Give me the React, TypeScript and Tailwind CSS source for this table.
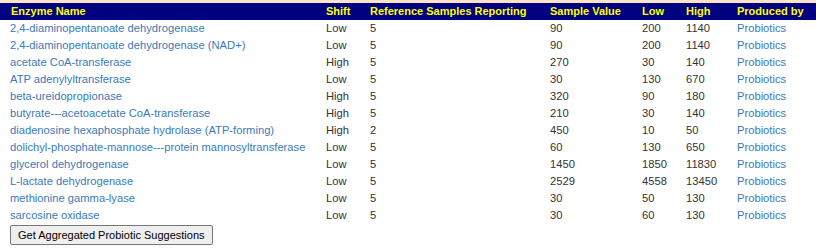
import React from "react";

const rows: [string, string, string, string, string, string][] = [
  ["2,4-diaminopentanoate dehydrogenase", "Low", "5", "90", "200", "1140"],
  ["2,4-diaminopentanoate dehydrogenase (NAD+)", "Low", "5", "90", "200", "1140"],
  ["acetate CoA-transferase", "High", "5", "270", "30", "140"],
  ["ATP adenylyltransferase", "Low", "5", "30", "130", "670"],
  ["beta-ureidopropionase", "High", "5", "320", "90", "180"],
  ["butyrate---acetoacetate CoA-transferase", "High", "5", "210", "30", "140"],
  ["diadenosine hexaphosphate hydrolase (ATP-forming)", "High", "2", "450", "10", "50"],
  ["dolichyl-phosphate-mannose---protein mannosyltransferase", "Low", "5", "60", "130", "650"],
  ["glycerol dehydrogenase", "Low", "5", "1450", "1850", "11830"],
  ["L-lactate dehydrogenase", "Low", "5", "2529", "4558", "13450"],
  ["methionine gamma-lyase", "Low", "5", "30", "50", "130"],
  ["sarcosine oxidase", "Low", "5", "30", "60", "130"],
];

export default function App() {
  return (
    <div className="w-[816px] h-[250px] bg-white text-[11px] text-[#333] overflow-hidden" style={{ fontFamily: '"Liberation Sans", Arial, sans-serif' }}>
      <div className="h-[3px] bg-[#fde4c9]" />
      <table className="w-full table-fixed border-collapse">
        <colgroup>
          <col className="w-[316px]" />
          <col className="w-[44px]" />
          <col className="w-[180px]" />
          <col className="w-[92px]" />
          <col className="w-[44px]" />
          <col className="w-[51px]" />
          <col />
        </colgroup>
        <thead>
          <tr className="bg-[#000080] text-[#ffff00] font-bold h-[17px] text-left">
            <th className="pl-[11px] py-0 leading-[17px]">Enzyme Name</th>
            <th className="pl-[10px] py-0 leading-[17px]">Shift</th>
            <th className="pl-[10px] py-0 leading-[17px] whitespace-nowrap">Reference Samples Reporting</th>
            <th className="pl-[10px] py-0 leading-[17px] whitespace-nowrap">Sample Value</th>
            <th className="pl-[10px] py-0 leading-[17px]">Low</th>
            <th className="pl-[10px] py-0 leading-[17px]">High</th>
            <th className="pl-[10px] py-0 leading-[17px] whitespace-nowrap">Produced by</th>
          </tr>
        </thead>
        <tbody className="text-[11.2px]">
          {rows.map((r) => (
            <tr key={r[0]} className="h-[17px]">
              <td className="pl-[10px] leading-[17px] whitespace-nowrap">
                <a className="text-[#3a7ab8]">{r[0]}</a>
              </td>
              <td className="pl-[10px] leading-[17px]">{r[1]}</td>
              <td className="pl-[10px] leading-[17px]">{r[2]}</td>
              <td className="pl-[10px] leading-[17px]">{r[3]}</td>
              <td className="pl-[10px] leading-[17px]">{r[4]}</td>
              <td className="pl-[10px] leading-[17px]">{r[5]}</td>
              <td className="pl-[10px] leading-[17px]">
                <a className="text-[#3a7ab8]">Probiotics</a>
              </td>
            </tr>
          ))}
        </tbody>
      </table>
      <div className="pl-[10px] pt-[1px]">
        <button className="h-[20px] px-[7px] text-[11px] text-black bg-[#efefef] border border-[#767676] rounded-[2px] leading-none">
          Get Aggregated Probiotic Suggestions
        </button>
      </div>
    </div>
  );
}
